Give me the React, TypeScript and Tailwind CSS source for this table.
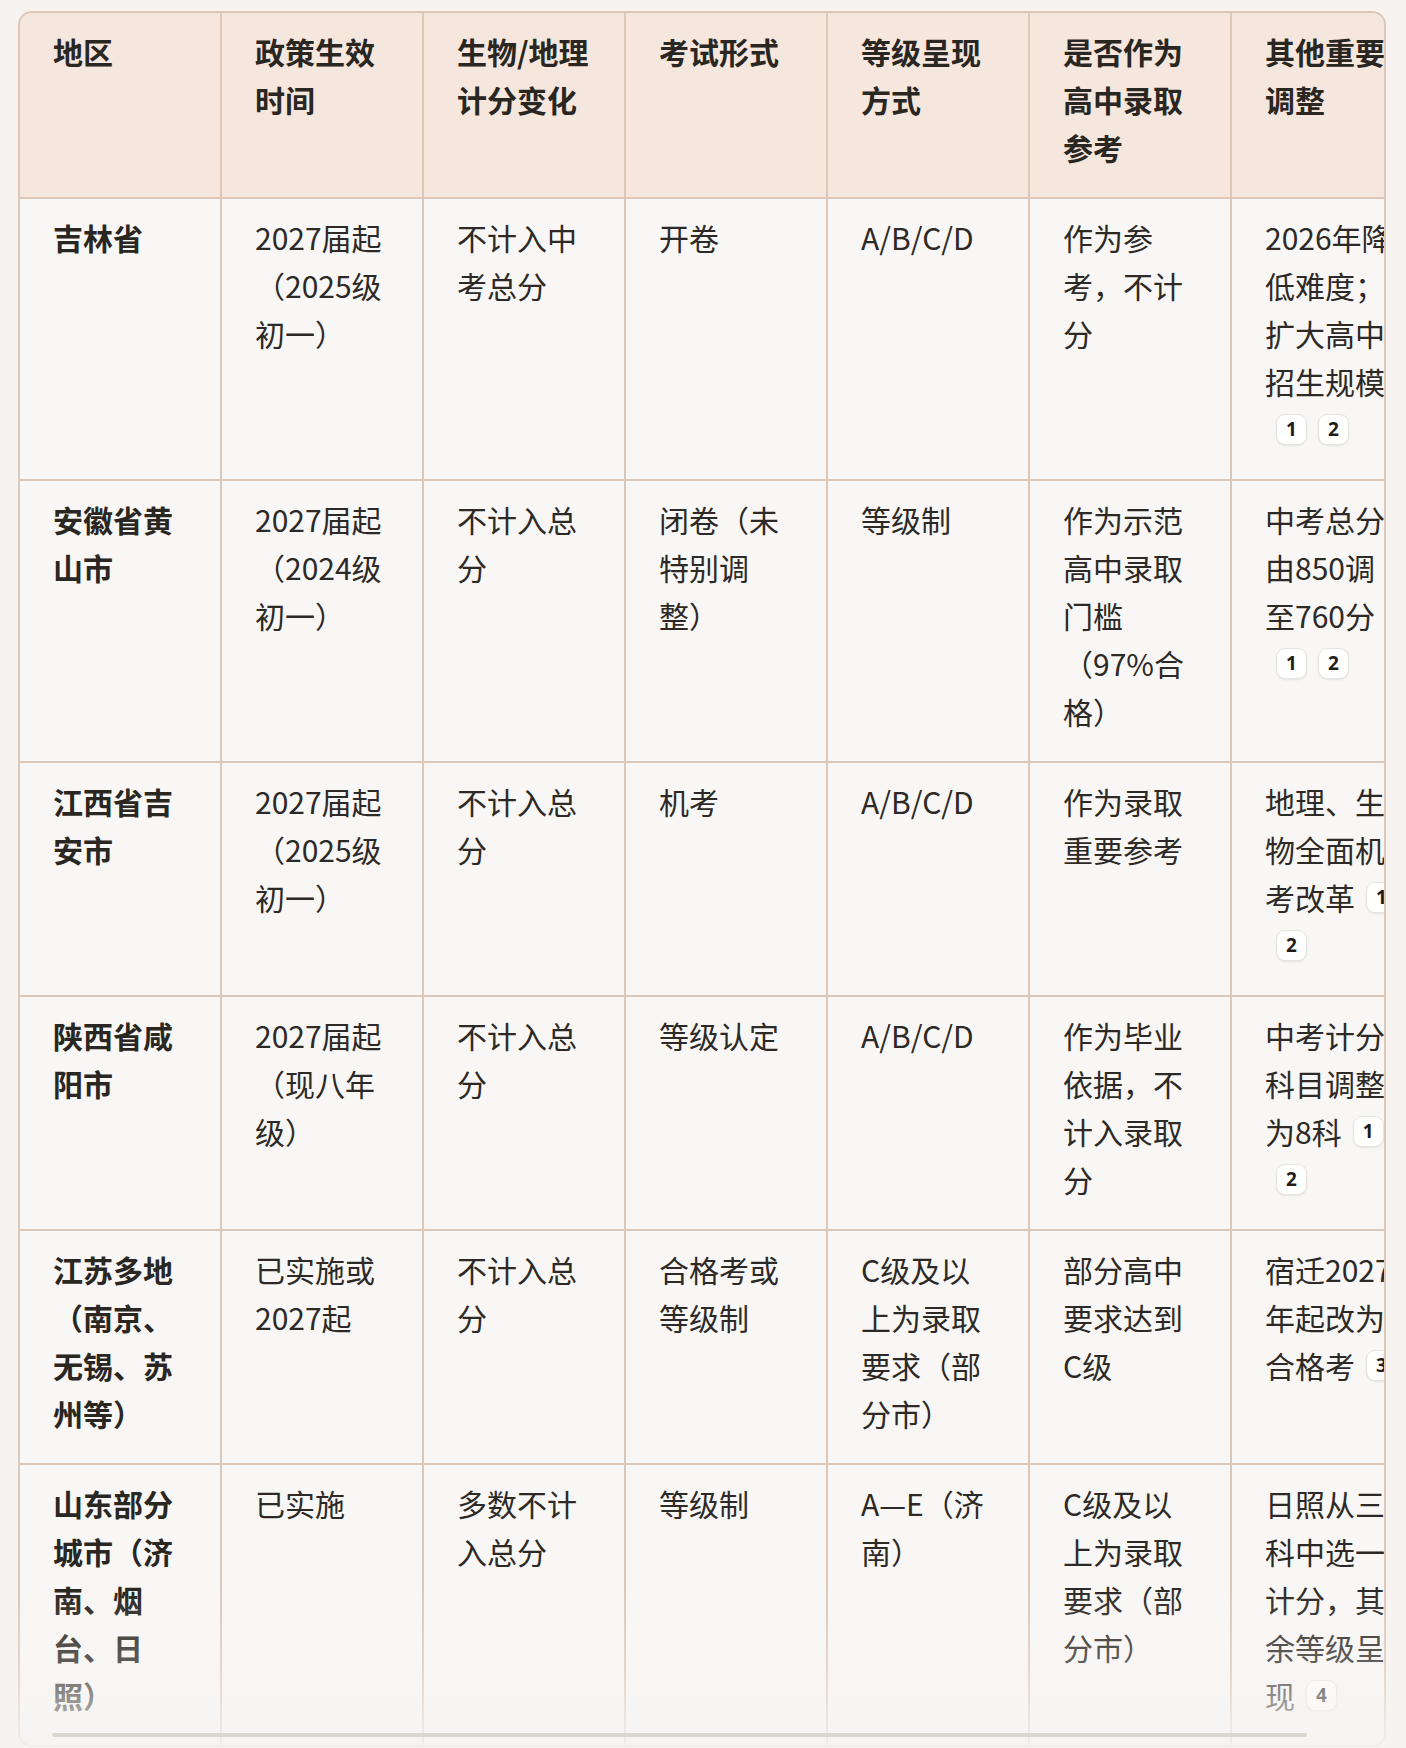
// 中考生物/地理计分政策对比表 — 折叠视图（底部渐隐 + 横向滚动条）

type Row = { region: string; cells: string[]; note: string; refs: number[] }

const HEAD = ['地区', '政策生效时间', '生物/地理计分变化', '考试形式', '等级呈现方式', '是否作为高中录取参考', '其他重要调整']

const ROWS: Row[] = [
  { region: '吉林省', cells: ['2027届起（2025级初一）', '不计入中考总分', '开卷', 'A/B/C/D', '作为参考，不计分'], note: '2026年降低难度；扩大高中招生规模', refs: [1, 2] },
  { region: '安徽省黄山市', cells: ['2027届起（2024级初一）', '不计入总分', '闭卷（未特别调整）', '等级制', '作为示范高中录取门槛（97%合格）'], note: '中考总分由850调至760分', refs: [1, 2] },
  { region: '江西省吉安市', cells: ['2027届起（2025级初一）', '不计入总分', '机考', 'A/B/C/D', '作为录取重要参考'], note: '地理、生物全面机考改革', refs: [1, 2] },
  { region: '陕西省咸阳市', cells: ['2027届起（现八年级）', '不计入总分', '等级认定', 'A/B/C/D', '作为毕业依据，不计入录取分'], note: '中考计分科目调整为8科', refs: [1, 2] },
  { region: '江苏多地（南京、无锡、苏州等）', cells: ['已实施或2027起', '不计入总分', '合格考或等级制', 'C级及以上为录取要求（部分市）', '部分高中要求达到C级'], note: '宿迁2027年起改为合格考', refs: [3] },
  { region: '山东部分城市（济南、烟台、日照）', cells: ['已实施', '多数不计入总分', '等级制', 'A—E（济南）', 'C级及以上为录取要求（部分市）'], note: '日照从三科中选一计分，其余等级呈现', refs: [4] },
]

const cellCls = 'w-[202px] border-r-2 border-[#ddc8b8] pl-[33px] pr-[35px] pt-[14px] pb-[26px] text-left align-top'

function Ref({ n }: { n: number }) {
  return (
    <span className="ml-[11px] inline-flex h-[31px] w-[31px] -translate-y-[4px] items-center justify-center rounded-[9px] border border-[#e7e3df] bg-white align-middle font-['Noto_Sans',sans-serif] text-[19px] font-bold leading-none text-[#1f1c1a] shadow-[0_1px_2px_rgba(0,0,0,0.08)]">{n}</span>
  )
}

export default function App() {
  return (
    <div className="relative min-h-screen bg-[#f6f3f0] pl-[18px] pt-[11px] font-['Noto_Sans_CJK_SC','Noto_Sans',sans-serif] text-[30px] leading-[48px] text-[#2d2926]">
      <div className="relative w-[1368px] overflow-hidden rounded-[14px] border-2 border-[#ddc8b8] bg-[#f8f7f5]">
        <table className="w-[1414px] table-fixed border-separate border-spacing-0">
          <thead>
            <tr className="bg-[#f5e7dd]">
              {HEAD.map((h) => (
                <th key={h} className={`${cellCls} border-b-2 font-bold text-[#2a2622]`}>{h}</th>
              ))}
            </tr>
          </thead>
          <tbody>
            {ROWS.map((r, i) => {
              const last = i === ROWS.length - 1
              const rowBorder = last ? '' : 'border-b-2'
              return (
                <tr key={r.region}>
                  <td className={`${cellCls} ${rowBorder} font-bold text-[#2a2622]`}>{r.region}</td>
                  {r.cells.map((c, j) => (
                    <td key={j} className={`${cellCls} ${rowBorder}`}>{c}</td>
                  ))}
                  <td className={`${cellCls} ${rowBorder}`}>
                    {r.note}
                    {r.refs.map((n) => <Ref key={n} n={n} />)}
                  </td>
                </tr>
              )
            })}
          </tbody>
        </table>
      </div>

      {/* 折叠渐隐 */}
      <div className="pointer-events-none absolute bottom-0 left-0 right-0 h-[160px] bg-[linear-gradient(to_bottom,rgba(246,244,242,0)_0%,rgba(246,244,242,0.25)_45%,rgba(246,244,242,0.85)_100%)]" />
      {/* 横向滚动条 */}
      <div className="absolute bottom-[11px] left-[52px] h-[4px] w-[1255px] rounded-full bg-[#dad6d2]" />
    </div>
  )
}
